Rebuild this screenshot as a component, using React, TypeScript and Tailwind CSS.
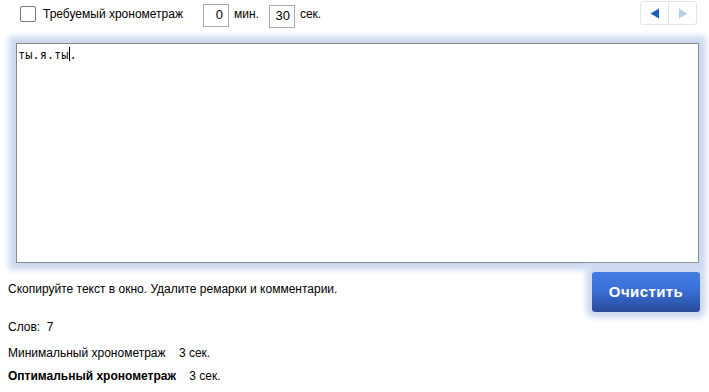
import React from "react";

function NavArrows() {
  return (
    <div className="flex h-[24px] w-[57px] overflow-hidden rounded-[3px] border border-[#dfe6f0] bg-white">
      <button className="flex flex-1 items-center justify-center border-r border-[#dfe6f0]">
        <svg width="10" height="11" viewBox="0 0 10 11">
          <path d="M9 0.5 L0.5 5.5 L9 10.5 Z" fill="#1d5cbf" />
        </svg>
      </button>
      <button className="flex flex-1 items-center justify-center">
        <svg width="10" height="11" viewBox="0 0 10 11">
          <path d="M1 0.5 L9.5 5.5 L1 10.5 Z" fill="#b9cde9" />
        </svg>
      </button>
    </div>
  );
}

export default function App() {
  return (
    <div className="relative h-[392px] w-[709px] overflow-hidden bg-white font-['Liberation_Sans',Arial,sans-serif] text-[12px] leading-[18px] text-black">
      {/* top row */}
      <div className="flex h-[30px] items-start pt-[4px]">
        <div className="ml-[20px] mt-[2px] h-[16px] w-[16px] rounded-[2px] border border-[#777] bg-white" />
        <span className="ml-[7px] mt-[1px]">Требуемый хронометраж</span>
        <div className="ml-[20px] flex h-[23px] w-[26px] items-end justify-end border border-[#aaa] pb-[2px] pr-[5px] text-[13px]">
          0
        </div>
        <span className="ml-[5px] mt-[1px]">мин.</span>
        <div className="ml-[10px] mt-[1px] flex h-[23px] w-[26px] items-end justify-end border border-[#aaa] pb-[2px] pr-[4px] text-[13px]">
          30
        </div>
        <span className="ml-[5px] mt-[1px]">сек.</span>
        <div className="ml-auto mr-[12px] -mt-[3px]">
          <NavArrows />
        </div>
      </div>

      {/* text area with glow */}
      <div className="ml-[16px] mr-[10px] mt-[13px] h-[220px] border border-[#8a8a8a] bg-white px-[1px] pt-[1px] font-['DejaVu_Sans_Mono',monospace] text-[12px] leading-[14px] text-[#111] shadow-[0_0_6px_7px_#cdd9ef]">
        ты.я.ты<span className="inline-block h-[14px] w-px translate-y-[2px] bg-black" />.
      </div>

      {/* hint + button */}
      <div className="flex items-start">
        <p className="ml-[8px] mt-[17px]">Скопируйте текст в окно. Удалите ремарки и комментарии.</p>
        <button className="ml-auto mr-[9px] mt-[9px] flex h-[40px] w-[108px] items-center justify-center rounded-[3px] bg-[linear-gradient(#437ee3,#3a6fd6_45%,#2f58b0_80%,#2b4c98)] text-[15px] font-bold tracking-[0.4px] text-white shadow-[0_0_6px_6px_#cdd9ef]">
          Очистить
        </button>
      </div>

      <div className="ml-[8px] mt-[6px]">Слов:&nbsp;&nbsp;7</div>
      <div className="ml-[8px] mt-[8px]">Минимальный хронометраж&nbsp;&nbsp;&nbsp;&nbsp;3 сек.</div>
      <div className="ml-[8px] mt-[5px]">
        <b>Оптимальный хронометраж</b>&nbsp;&nbsp;&nbsp;&nbsp;3 сек.
      </div>
    </div>
  );
}
